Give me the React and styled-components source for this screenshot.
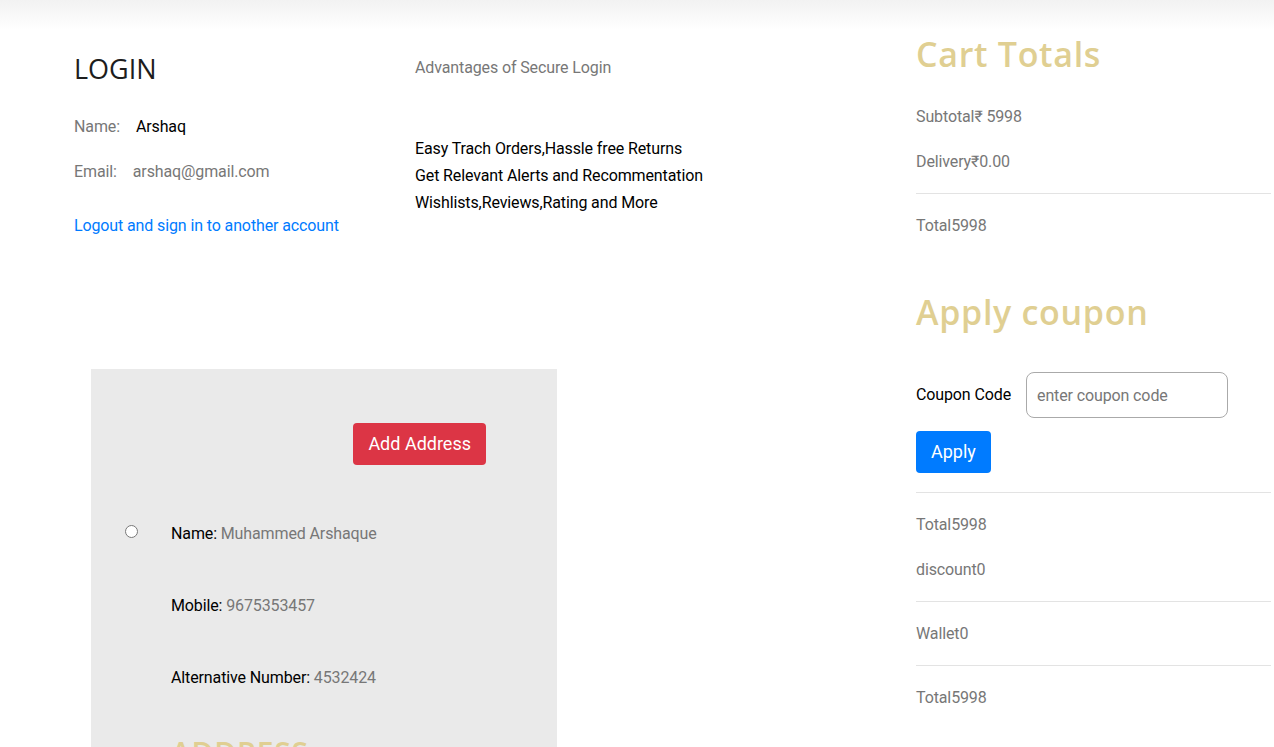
import React from "react";
import styled, { createGlobalStyle } from "styled-components";

const Global = createGlobalStyle`
  html, body { margin: 0; padding: 0; background: #fff; }
  body {
    font-family: Roboto, "Liberation Sans", sans-serif;
    font-size: 16px;
    letter-spacing: -0.12px;
    color: #212529;
  }
  * { box-sizing: border-box; }
`;

const Shade = styled.div`
  height: 30px;
  background: linear-gradient(#f2f2f2, #ffffff);
`;

const Layout = styled.div`
  display: flex;
  align-items: flex-start;
`;

const LeftCol = styled.div`
  width: 916px;
  flex: none;
`;

const TopRow = styled.div`
  display: flex;
  padding: 23px 0 0 74px;
`;

const LoginBlock = styled.section`
  width: 341px;
  flex: none;
`;

const LoginTitle = styled.h2`
  margin: 0;
  font-family: "Open Sans", sans-serif;
  font-weight: 500;
  font-size: 27px;
  line-height: 32px;
  letter-spacing: 0;
  color: #1d1d1d;
`;

const InfoRow = styled.p`
  margin: ${(p) => p.$mt}px 0 0;
  line-height: 24px;
  color: #777;
`;

const InfoValue = styled.span`
  margin-left: 16px;
  color: ${(p) => (p.$dark ? "#000" : "#777")};
`;

const LinkText = styled.a`
  display: block;
  margin-top: 30px;
  line-height: 24px;
  color: #007bff;
  text-decoration: none;
`;

const AdvBlock = styled.section`
  padding-top: 3px;
`;

const AdvTitle = styled.p`
  margin: 0;
  line-height: 24px;
  color: #777;
`;

const AdvList = styled.ul`
  list-style: none;
  margin: 55px 0 0;
  padding: 0;
  color: #000;
  line-height: 27px;
`;

const Panel = styled.div`
  margin: 131px 0 0 91px;
  width: 466px;
  height: 378px;
  background: #eaeaea;
  padding-top: 54px;
  overflow: hidden;
`;

const ButtonRow = styled.div`
  display: flex;
  justify-content: flex-end;
  padding-right: 71px;
`;

const Button = styled.button`
  border: none;
  border-radius: 4px;
  padding: 8px 15px;
  font-family: Roboto, sans-serif;
  font-size: 18px;
  line-height: 26px;
  letter-spacing: 0;
  color: #fff;
  background: ${(p) => (p.$variant === "danger" ? "#dc3545" : "#007bff")};
  cursor: pointer;
`;

const AddressBody = styled.div`
  display: flex;
  margin-top: 57px;
`;

const RadioCol = styled.div`
  width: 80px;
  padding-left: 34px;
  flex: none;
`;

const Radio = styled.input`
  margin: 3px 0 0;
  width: 13px;
  height: 13px;
`;

const Fields = styled.div`
  display: flex;
  flex-direction: column;
  gap: 48px;
`;

const Field = styled.p`
  margin: 0;
  line-height: 24px;
  color: #000;
`;

const FieldValue = styled.span`
  color: #777;
`;

const GoldHeading = styled.h2`
  margin: ${(p) => p.$mt || 0}px 0 0;
  font-family: "Open Sans", sans-serif;
  font-weight: 600;
  font-size: ${(p) => p.$size || 34}px;
  line-height: 48px;
  letter-spacing: 0.7px;
  color: #e0cf92;
`;

const RightCol = styled.aside`
  width: 355px;
  flex: none;
  display: flex;
  flex-direction: column;
`;

const Line = styled.p`
  margin: ${(p) => p.$mt}px 0 0;
  line-height: 24px;
  color: #777;
`;

const Divider = styled.hr`
  margin: ${(p) => p.$mt}px 0 0;
  border: none;
  border-top: 1px solid #e3e3e3;
  height: 0;
`;

const CouponRow = styled.div`
  display: flex;
  align-items: center;
  gap: 15px;
  margin-top: 36px;
`;

const CouponLabel = styled.label`
  color: #000;
  line-height: 24px;
`;

const CouponInput = styled.input`
  width: 202px;
  height: 46px;
  border: 1px solid #aaa;
  border-radius: 8px;
  padding: 0 10px;
  font-family: Roboto, sans-serif;
  font-size: 16px;
  letter-spacing: -0.12px;
  color: #333;
  &::placeholder { color: #777; }
`;

const ApplyWrap = styled.div`
  margin-top: 13px;
`;

export default function App() {
  return (
    <>
      <Global />
      <Shade />
      <Layout>
        <LeftCol>
          <TopRow>
            <LoginBlock>
              <LoginTitle>LOGIN</LoginTitle>
              <InfoRow $mt={30}>
                Name:<InfoValue $dark>Arshaq</InfoValue>
              </InfoRow>
              <InfoRow $mt={21}>
                Email:<InfoValue>arshaq@gmail.com</InfoValue>
              </InfoRow>
              <LinkText href="#">Logout and sign in to another account</LinkText>
            </LoginBlock>
            <AdvBlock>
              <AdvTitle>Advantages of Secure Login</AdvTitle>
              <AdvList>
                <li>Easy Trach Orders,Hassle free Returns</li>
                <li>Get Relevant Alerts and Recommentation</li>
                <li>Wishlists,Reviews,Rating and More</li>
              </AdvList>
            </AdvBlock>
          </TopRow>
          <Panel>
            <ButtonRow>
              <Button $variant="danger">Add Address</Button>
            </ButtonRow>
            <AddressBody>
              <RadioCol>
                <Radio type="radio" name="address" />
              </RadioCol>
              <Fields>
                <Field>
                  Name: <FieldValue>Muhammed Arshaque</FieldValue>
                </Field>
                <Field>
                  Mobile: <FieldValue>9675353457</FieldValue>
                </Field>
                <Field>
                  Alternative Number: <FieldValue>4532424</FieldValue>
                </Field>
                <GoldHeading $size={30} $mt={-9}>ADDRESS</GoldHeading>
              </Fields>
            </AddressBody>
          </Panel>
        </LeftCol>
        <RightCol>
          <GoldHeading>Cart Totals</GoldHeading>
          <Line $mt={27}>Subtotal₹ 5998</Line>
          <Line $mt={21}>Delivery₹0.00</Line>
          <Divider $mt={19} />
          <Line $mt={20}>Total5998</Line>
          <GoldHeading $mt={50}>Apply coupon</GoldHeading>
          <CouponRow>
            <CouponLabel>Coupon Code</CouponLabel>
            <CouponInput placeholder="enter coupon code" />
          </CouponRow>
          <ApplyWrap>
            <Button>Apply</Button>
          </ApplyWrap>
          <Divider $mt={19} />
          <Line $mt={20}>Total5998</Line>
          <Line $mt={21}>discount0</Line>
          <Divider $mt={19} />
          <Line $mt={20}>Wallet0</Line>
          <Divider $mt={19} />
          <Line $mt={20}>Total5998</Line>
        </RightCol>
      </Layout>
    </>
  );
}
